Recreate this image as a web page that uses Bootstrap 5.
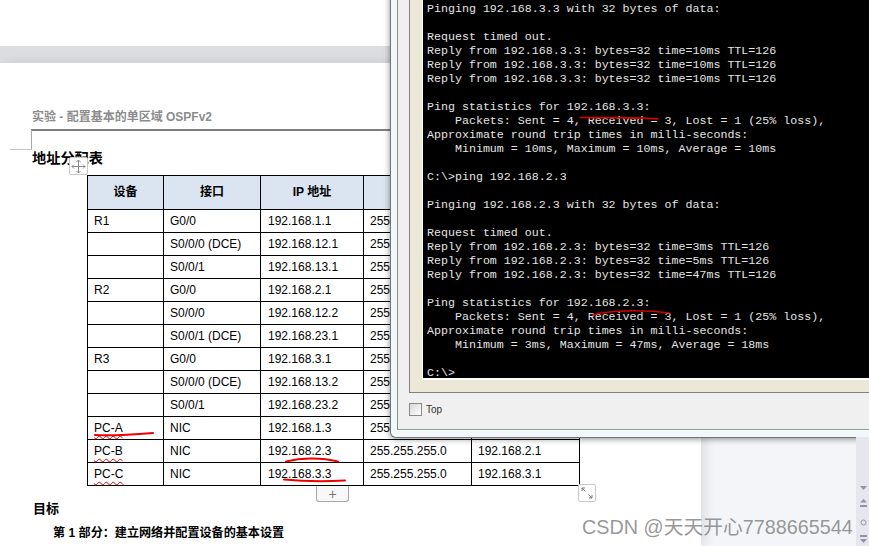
<!DOCTYPE html>
<html lang="zh">
<head>
<meta charset="utf-8">
<title>Lab</title>
<link rel="stylesheet" href="https://cdn.jsdelivr.net/npm/bootstrap@5.3.0/dist/css/bootstrap.min.css">
<style>
html,body{height:546px;overflow:hidden}
body{background:#f4f5f8;position:relative;font-family:"Liberation Sans","Noto Sans CJK SC",sans-serif;color:#000}
.doc-strip{height:46px;background:#fff}
.doc-gap{height:17px;background:#dcdde0}
.doc-page{width:701px;height:483px;background:#fff;padding:46px 0 0 32px;box-shadow:5px 0 10px rgba(0,0,0,.09)}
.doc-title{font-size:12px;font-weight:700;color:#8c8c8c;line-height:16px;height:20px}
.doc-rule{height:2px;background:#7f7f7f;width:361px;margin:0 0 17px -1px}
.doc-h{font-size:14.2px;font-weight:700;line-height:20px;height:27px;margin:0}
.ip-table{border-collapse:collapse;margin-left:55px;width:492px;table-layout:fixed;font-size:12px}
.ip-table th,.ip-table td{border:1px solid #000;padding:2px 0 0 6px;height:23px;line-height:18px;vertical-align:top;white-space:nowrap}
.ip-table td:nth-child(3){padding-left:7px}
.ip-table th{background:#dbe5f1;height:34px;text-align:center;padding:7px 0 0;font-weight:700}
.squig{text-decoration:underline wavy #e00000 1px;text-underline-offset:3px}
.doc-goal{font-size:13px;font-weight:700;line-height:18px;margin:14px 0 0 1px}
.doc-part{font-size:12.1px;font-weight:700;line-height:16px;margin:7px 0 0 21px}
.crop-v{position:absolute;left:31px;top:130px;width:1px;height:20px;background:#a6a6a6}
.crop-h{position:absolute;left:10px;top:149px;width:22px;height:1px;background:#c4c4c4}
.handle{position:absolute;background:#fff;border:1px solid #c8c8c8;border-radius:2px;display:flex;align-items:center;justify-content:center}
.h-move{left:69px;top:157px;width:19px;height:18px}
.h-size{left:578px;top:484px;width:18px;height:18px}
.h-plus{left:316px;top:486px;width:33px;height:16px;border-color:#a8a8a8;border-top:0;border-radius:0 0 3px 3px;background:#f8f8f8;color:#777;font-size:14px;line-height:1}
.ink{position:absolute;pointer-events:none;overflow:visible}
.console-win{position:absolute;left:390px;top:-10px;width:500px;height:448px;background:#f2f8fa;border:1px solid #6f7478;border-top:0;border-radius:0 0 0 6px;box-shadow:0 1px 6px rgba(0,0,0,.45);padding:0 0 7px 6px}
.console-inner{height:100%;background:#f0f0f0;border-left:1px solid #8d8d8d;border-bottom:1px solid #9a9a9a;padding-left:11px;display:flex;flex-direction:column}
.console-frame{height:403px;flex:none;background:#ebe8d8;border:1px solid #808080;border-top:0;border-right:0;padding:0 0 12px 12px}
.console-screen{height:100%;background:#000;border-left:1px solid #fff;border-bottom:2px solid #fff;padding:0 0 0 4px;overflow:hidden}
.console-text{font-family:"Liberation Mono",monospace;font-size:11.65px;line-height:14px;color:#e4e4e4;margin:0;padding-top:12px;white-space:pre;overflow:visible}
.top-row{display:flex;align-items:center;gap:4px;font-size:10px;color:#333;padding-top:9px}
.top-box{width:13px;height:13px;border:1px solid #8a8a8a;background:linear-gradient(135deg,#d8d8d8,#fff)}
.sbar{position:absolute;left:856px;top:437px;width:13px;height:109px;background:#e6e7ee}
.watermark{position:absolute;left:582px;top:516px;font-size:19.8px;line-height:22px;color:rgba(125,125,125,.8);white-space:nowrap}
.sbtn{position:absolute;left:4px;width:7px;height:9px;color:#8e93a8;display:block}
</style>
</head>
<body>
<div class="doc-strip"></div>
<div class="doc-gap"></div>
<div class="doc-page">
  <div class="doc-title">实验 - 配置基本的单区域 OSPFv2</div>
  <div class="doc-rule"></div>
  <h2 class="doc-h">地址分配表</h2>
  <table class="ip-table">
    <colgroup><col style="width:76px"><col style="width:97px"><col style="width:103px"><col style="width:108px"><col style="width:108px"></colgroup>
    <thead><tr><th>设备</th><th>接口</th><th>IP 地址</th><th></th><th></th></tr></thead>
    <tbody>
      <tr><td>R1</td><td>G0/0</td><td>192.168.1.1</td><td>255</td><td></td></tr>
      <tr><td></td><td>S0/0/0 (DCE)</td><td>192.168.12.1</td><td>255</td><td></td></tr>
      <tr><td></td><td>S0/0/1</td><td>192.168.13.1</td><td>255</td><td></td></tr>
      <tr><td>R2</td><td>G0/0</td><td>192.168.2.1</td><td>255</td><td></td></tr>
      <tr><td></td><td>S0/0/0</td><td>192.168.12.2</td><td>255</td><td></td></tr>
      <tr><td></td><td>S0/0/1 (DCE)</td><td>192.168.23.1</td><td>255</td><td></td></tr>
      <tr><td>R3</td><td>G0/0</td><td>192.168.3.1</td><td>255</td><td></td></tr>
      <tr><td></td><td>S0/0/0 (DCE)</td><td>192.168.13.2</td><td>255</td><td></td></tr>
      <tr><td></td><td>S0/0/1</td><td>192.168.23.2</td><td>255</td><td></td></tr>
      <tr><td><span class="squig">PC-A</span></td><td>NIC</td><td>192.168.1.3</td><td>255</td><td></td></tr>
      <tr><td><span class="squig">PC-B</span></td><td>NIC</td><td>192.168.2.3</td><td>255.255.255.0</td><td>192.168.2.1</td></tr>
      <tr><td><span class="squig">PC-C</span></td><td>NIC</td><td>192.168.3.3</td><td>255.255.255.0</td><td>192.168.3.1</td></tr>
    </tbody>
  </table>
  <div class="doc-goal">目标</div>
  <div class="doc-part">第 1 部分：建立网络并配置设备的基本设置</div>
</div>
<span class="crop-v"></span><span class="crop-h"></span>
<span class="handle h-move"><svg width="15" height="15" viewBox="0 0 15 15" fill="none" stroke="#8a8a8a"><path d="M7.5 1v13M1 7.5h13M5.5 3l2-2 2 2M5.5 12l2 2 2-2M3 5.5l-2 2 2 2M12 5.5l2 2-2 2"/></svg></span>
<span class="handle h-size"><svg width="14" height="14" viewBox="0 0 14 14" fill="none" stroke="#777"><path d="M2 2l3.5 3.5M2 2h3M2 2v3M12 12L8.5 8.5M12 12H9M12 12V9"/></svg></span>
<span class="handle h-plus">+</span>
<svg class="ink" style="left:0;top:0" width="869" height="546" fill="none" stroke="#ee0000" stroke-width="2" stroke-linecap="round">
  <path d="M95 435C110 436 128 435 153 433"/>
  <path d="M286 461.500C300 458 320 457 338 461.500"/>
  <path d="M284 479.500C300 481 325 481.500 345 480.500"/>
</svg>
<div class="console-win">
  <div class="console-inner">
    <div class="console-frame">
      <div class="console-screen"><pre class="console-text">Pinging 192.168.3.3 with 32 bytes of data:

Request timed out.
Reply from 192.168.3.3: bytes=32 time=10ms TTL=126
Reply from 192.168.3.3: bytes=32 time=10ms TTL=126
Reply from 192.168.3.3: bytes=32 time=10ms TTL=126

Ping statistics for 192.168.3.3:
    Packets: Sent = 4, Received = 3, Lost = 1 (25% loss),
Approximate round trip times in milli-seconds:
    Minimum = 10ms, Maximum = 10ms, Average = 10ms

C:\&gt;ping 192.168.2.3

Pinging 192.168.2.3 with 32 bytes of data:

Request timed out.
Reply from 192.168.2.3: bytes=32 time=3ms TTL=126
Reply from 192.168.2.3: bytes=32 time=5ms TTL=126
Reply from 192.168.2.3: bytes=32 time=47ms TTL=126

Ping statistics for 192.168.2.3:
    Packets: Sent = 4, Received = 3, Lost = 1 (25% loss),
Approximate round trip times in milli-seconds:
    Minimum = 3ms, Maximum = 47ms, Average = 18ms

C:\&gt;</pre></div>
    </div>
    <label class="top-row"><span class="top-box"></span>Top</label>
  </div>
</div>
<svg class="ink" style="left:0;top:0" width="869" height="546" fill="none" stroke="#d40000" stroke-width="1.6" stroke-linecap="round">
  <path d="M580 117.500C600 118 630 117 658 119"/>
  <path d="M593 315C605 311 640 309 669 313"/>
</svg>
<div class="sbar">
  <svg class="sbtn" style="top:46px" viewBox="0 0 7 9" fill="currentColor"><path d="M0 3h7L3.500 7z"/></svg>
  <svg class="sbtn" style="top:62px" viewBox="0 0 7 9" fill="currentColor"><path d="M3.500 0L7 3.500H0zM0 6h7v2H0z"/></svg>
  <svg class="sbtn" style="top:81px" viewBox="0 0 7 9" fill="none" stroke="currentColor"><circle cx="3.500" cy="4.500" r="2.500"/></svg>
  <svg class="sbtn" style="top:98px" viewBox="0 0 7 9" fill="currentColor"><path d="M0 0h7v2H0zM0 4h7L3.500 8z"/></svg>
</div>
<div class="watermark">CSDN @天天开心7788665544</div>
<script src="https://cdn.jsdelivr.net/npm/bootstrap@5.3.0/dist/js/bootstrap.bundle.min.js"></script>
</body>
</html>
